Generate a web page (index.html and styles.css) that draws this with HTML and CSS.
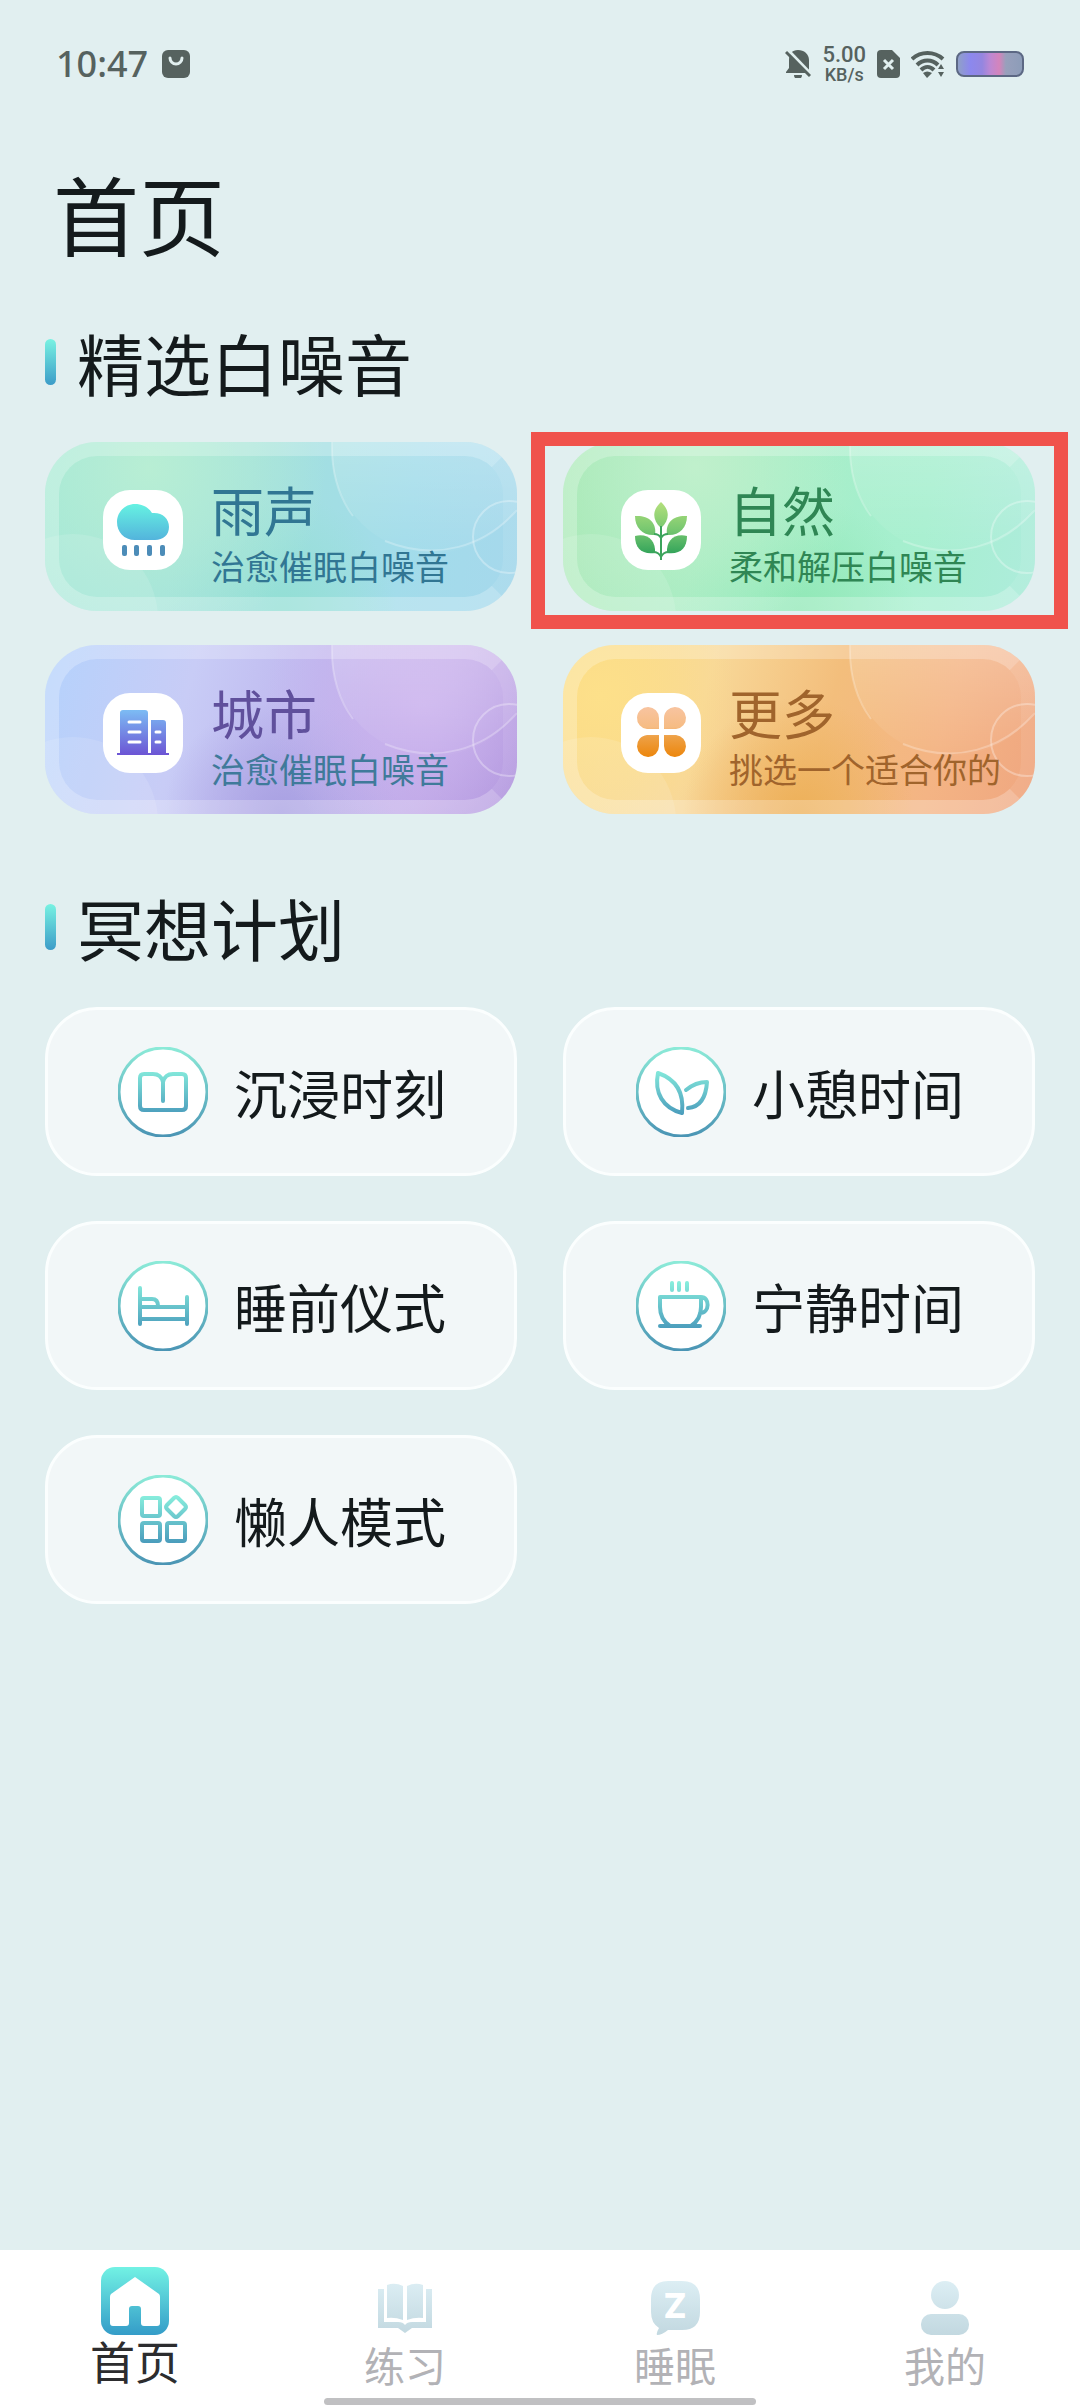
FILE: index.html
```html
<!DOCTYPE html>
<html lang="zh-CN">
<head>
    <meta charset="UTF-8">
    <meta name="viewport" content="width=device-width, initial-scale=1.0">
    <title>首页</title>
    <link rel="stylesheet" href="styles.css">
</head>
<body>
    <!-- Shared gradients and card decoration -->
    <svg class="defs" width="0" height="0" aria-hidden="true">
        <defs>
            <linearGradient id="teal" gradientUnits="userSpaceOnUse" x1="0" y1="22" x2="0" y2="68">
                <stop offset="0" stop-color="#86ecdc"/>
                <stop offset="1" stop-color="#4a9cbc"/>
            </linearGradient>
            <linearGradient id="ring" gradientUnits="userSpaceOnUse" x1="0" y1="0" x2="0" y2="90">
                <stop offset="0" stop-color="#8cebd8"/>
                <stop offset="1" stop-color="#4a94b4"/>
            </linearGradient>
            <linearGradient id="cloud" x1="0" y1="0" x2="0" y2="1">
                <stop offset="0" stop-color="#66f2e2"/>
                <stop offset="1" stop-color="#53b4dc"/>
            </linearGradient>
            <linearGradient id="leaf" gradientUnits="userSpaceOnUse" x1="0" y1="12" x2="0" y2="66">
                <stop offset="0" stop-color="#b4e07c"/>
                <stop offset="0.5" stop-color="#78c870"/>
                <stop offset="1" stop-color="#2ca058"/>
            </linearGradient>
            <linearGradient id="city" gradientUnits="userSpaceOnUse" x1="0" y1="17" x2="0" y2="62">
                <stop offset="0" stop-color="#7cbcf4"/>
                <stop offset="1" stop-color="#6c54d4"/>
            </linearGradient>
            <linearGradient id="petal" gradientUnits="userSpaceOnUse" x1="0" y1="14" x2="0" y2="64">
                <stop offset="0" stop-color="#f8c4a0"/>
                <stop offset="0.4" stop-color="#f6bc84"/>
                <stop offset="0.6" stop-color="#eea044"/>
                <stop offset="1" stop-color="#ec860c"/>
            </linearGradient>
            <linearGradient id="home" x1="0" y1="0" x2="0" y2="1">
                <stop offset="0" stop-color="#72f2e4"/>
                <stop offset="1" stop-color="#349cc8"/>
            </linearGradient>
            <linearGradient id="pale" gradientUnits="userSpaceOnUse" x1="0" y1="0" x2="0" y2="54">
                <stop offset="0" stop-color="#dceef4"/>
                <stop offset="1" stop-color="#c2d8e0"/>
            </linearGradient>
            <linearGradient id="battery" x1="0" y1="0" x2="1" y2="0">
                <stop offset="0" stop-color="#90a2c4"/>
                <stop offset="0.2" stop-color="#8c88ee"/>
                <stop offset="0.38" stop-color="#9486e0"/>
                <stop offset="0.5" stop-color="#bc88d4"/>
                <stop offset="0.64" stop-color="#d484bc"/>
                <stop offset="0.74" stop-color="#98a0bc"/>
                <stop offset="1" stop-color="#8c9cb8"/>
            </linearGradient>
            <linearGradient id="bubble" x1="0" y1="0" x2="0" y2="1">
                <stop offset="0.4" stop-color="#fff" stop-opacity="0.22"/>
                <stop offset="1" stop-color="#fff" stop-opacity="0.02"/>
            </linearGradient>
            <symbol id="card-art" viewBox="0 0 472 169" preserveAspectRatio="xMaxYMid slice">
                <circle cx="388" cy="10" r="101" fill="url(#bubble)"/>
                <path d="M287 0C286 34 296 58 308 74M340 99C392 120 440 104 472 68" fill="none" stroke="#fff" stroke-opacity="0.25" stroke-width="2"/>
                <circle cx="464" cy="95" r="36" fill="none" stroke="#fff" stroke-opacity="0.3" stroke-width="2"/>
                <circle cx="28" cy="177" r="85" fill="#fff" fill-opacity="0.12"/>
            </symbol>
        </defs>
    </svg>

    <header class="status-bar">
        <div class="status-left">
            <span class="clock">10:47</span>
            <svg width="28" height="28" viewBox="0 0 28 28">
                <rect width="28" height="28" rx="6" fill="#56625f"/>
                <path d="M8 8a6 6 0 0 0 12 0" fill="none" stroke="#e1efef" stroke-width="3" stroke-linecap="round"/>
            </svg>
        </div>
        <div class="status-right">
            <svg width="26" height="28" viewBox="0 0 26 28">
                <path d="M13 0C7 0 4 4 4 10V18L1 22V23H24V10C24 4 19 0 13 0ZM9 25a4 4 0 0 0 8 0Z" fill="#56625f"/>
                <path d="M3 0L27 25" stroke="#e1efef" stroke-width="3"/>
                <path d="M1 2L25 26" stroke="#56625f" stroke-width="3"/>
            </svg>
            <div class="net-speed">
                <span class="net-value">5.00</span>
                <span class="net-unit">KB/s</span>
            </div>
            <svg width="23" height="28" viewBox="0 0 23 28">
                <path d="M4 0H15L23 8V24Q23 28 19 28H4Q0 28 0 24V4Q0 0 4 0Z" fill="#56625f"/>
                <path d="M7 10L16 19M16 10L7 19" stroke="#e1efef" stroke-width="3"/>
            </svg>
            <svg width="34" height="28" viewBox="0 0 34 28">
                <g fill="none" stroke="#56625f" stroke-width="4">
                    <path d="M1 9C10 1 23 1 32 9"/>
                    <path d="M6 15C12 9 21 9 27 15"/>
                    <path d="M10 20C14 16 19 16 23 20"/>
                </g>
                <path d="M12 23Q16 20 21 23L16 28ZM27 19L30 14L33 19ZM27 22H33L30 27Z" fill="#56625f"/>
            </svg>
            <svg width="68" height="26" viewBox="0 0 68 26">
                <rect x="1" y="1" width="66" height="24" rx="7" fill="url(#battery)" stroke="#5c6884" stroke-width="2"/>
            </svg>
        </div>
    </header>

    <main class="content">
        <h1>首页</h1>

        <section>
            <h2>精选白噪音</h2>
            <div class="noise-grid">
                <a href="#rain" class="noise-card rain">
                    <svg class="card-art"><use href="#card-art"/></svg>
                    <svg class="noise-icon" viewBox="0 0 80 80">
                        <path d="M32 14C40 14 46 18 49 23C59 22 66 28 66 37C66 45 60 50 52 50H32C21 50 14 42 14 32C14 22 22 14 32 14Z" fill="url(#cloud)"/>
                        <g fill="#4c8cb8">
                            <rect x="19" y="55" width="5" height="11" rx="2"/>
                            <rect x="31" y="55" width="5" height="11" rx="2"/>
                            <rect x="44" y="55" width="5" height="11" rx="2"/>
                            <rect x="57" y="55" width="5" height="11" rx="2"/>
                        </g>
                    </svg>
                    <span class="noise-text"><strong>雨声</strong><small>治愈催眠白噪音</small></span>
                </a>
                <a href="#nature" class="noise-card nature selected">
                    <svg class="card-art"><use href="#card-art"/></svg>
                    <svg class="noise-icon" viewBox="0 0 80 80">
                        <g fill="url(#leaf)">
                            <path d="M40 12C49 20 49 30 40 38C31 30 31 20 40 12Z"/>
                            <path d="M14 26C27 25 36 32 34 45C22 46 14 38 14 26Z"/>
                            <path d="M66 26C53 25 44 32 46 45C58 46 66 38 66 26Z"/>
                            <path d="M14 46C27 43 35 51 34 63C21 65 14 58 14 46Z"/>
                            <path d="M66 46C53 43 45 51 46 63C59 65 66 58 66 46Z"/>
                        </g>
                        <path d="M40 36V70M33 44Q38 44 40 48Q42 44 47 44M32 62Q38 62 40 67Q42 62 48 62" fill="none" stroke="#3ca45c" stroke-width="2"/>
                    </svg>
                    <span class="noise-text"><strong>自然</strong><small>柔和解压白噪音</small></span>
                </a>
                <a href="#city" class="noise-card town">
                    <svg class="card-art"><use href="#card-art"/></svg>
                    <svg class="noise-icon" viewBox="0 0 80 80">
                        <path d="M17 60V20Q17 17 20 17H42Q45 17 45 20V60ZM48 58V27H60Q63 27 63 30V60H66V62H14V60H48Z" fill="url(#city)"/>
                        <path d="M26 29H37M26 39H37M26 49H37M53 39H57M53 49H57" stroke="#fff" stroke-width="3" stroke-linecap="round"/>
                    </svg>
                    <span class="noise-text"><strong>城市</strong><small>治愈催眠白噪音</small></span>
                </a>
                <a href="#more" class="noise-card more">
                    <svg class="card-art"><use href="#card-art"/></svg>
                    <svg class="noise-icon" viewBox="0 0 80 80">
                        <path d="M38 36H26A11 11 0 1 1 38 25ZM43 36V25A11 11 0 1 1 55 36ZM38 42V53A11 11 0 1 1 26 42ZM43 42H55A11 11 0 1 1 43 53Z" fill="url(#petal)"/>
                    </svg>
                    <span class="noise-text"><strong>更多</strong><small>挑选一个适合你的</small></span>
                </a>
            </div>
        </section>

        <section>
            <h2>冥想计划</h2>
            <div class="plan-grid">
                <a href="#immerse" class="plan-card">
                    <svg class="plan-icon" viewBox="0 0 90 90">
                        <circle cx="45" cy="45" r="44"/>
                        <path d="M45 54V35Q43 27 35 27H26Q22 27 22 31V59Q22 63 26 63H64Q68 63 68 59V31Q68 27 64 27H55Q47 27 45 35"/>
                    </svg>
                    <span>沉浸时刻</span>
                </a>
                <a href="#rest" class="plan-card">
                    <svg class="plan-icon" viewBox="0 0 90 90">
                        <circle cx="45" cy="45" r="44"/>
                        <path d="M22 26C18 46 27 61 46 66C48 48 42 33 22 26ZM50 43C56 38 62 35 71 35C70 50 64 60 52 61"/>
                    </svg>
                    <span>小憩时间</span>
                </a>
                <a href="#bedtime" class="plan-card">
                    <svg class="plan-icon" viewBox="0 0 90 90">
                        <circle cx="45" cy="45" r="44"/>
                        <path d="M22 27V63M69 36V63M22 46H69M22 58H69M22 38H34Q40 38 40 45"/>
                    </svg>
                    <span>睡前仪式</span>
                </a>
                <a href="#quiet" class="plan-card">
                    <svg class="plan-icon" viewBox="0 0 90 90">
                        <circle cx="45" cy="45" r="44"/>
                        <path d="M24 36H65V46C65 55 61 61 55 65H34C28 61 24 55 24 46ZM65 36C74 36 74 52 64 52M24 65H64M36 22V29M43 22V29M51 22V29"/>
                    </svg>
                    <span>宁静时间</span>
                </a>
                <a href="#lazy" class="plan-card">
                    <svg class="plan-icon" viewBox="0 0 90 90">
                        <circle cx="45" cy="45" r="44"/>
                        <rect x="24" y="23" width="18" height="18" rx="2"/>
                        <rect x="24" y="48" width="18" height="18" rx="2"/>
                        <rect x="49" y="48" width="18" height="18" rx="2"/>
                        <path d="M56 23Q58 21 60 23L67 30Q69 32 67 34L60 41Q58 43 56 41L49 34Q47 32 49 30Z"/>
                    </svg>
                    <span>懒人模式</span>
                </a>
            </div>
        </section>
    </main>

    <nav class="tab-bar">
        <a href="#home" class="tab active">
            <svg width="68" height="68" viewBox="0 0 68 68">
                <rect width="68" height="68" rx="14" fill="url(#home)"/>
                <path d="M34 10L58 27Q59 28 59 30V56Q59 59 56 59H43Q40 59 40 56V42Q40 39 37 39H31Q28 39 28 42V56Q28 59 25 59H12Q9 59 9 56V30Q9 28 10 27Z" fill="#fff"/>
            </svg>
            <span>首页</span>
        </a>
        <a href="#practice" class="tab">
            <svg width="54" height="54" viewBox="0 0 54 54">
                <path d="M9 4Q17 1 25 5V39Q17 36 9 37ZM29 5Q37 1 45 4V37Q37 36 29 39ZM0 8H6V41H20Q25 41 27 44Q29 41 34 41H48V8H54V47H34L27 52L20 47H0Z" fill="url(#pale)"/>
            </svg>
            <span>练习</span>
        </a>
        <a href="#sleep" class="tab">
            <svg width="54" height="54" viewBox="0 0 54 54">
                <path d="M20 0H34Q52 0 52 18V31Q52 49 34 49H20Q14 54 9 54Q8 52 11 47Q3 42 3 31V18Q3 0 20 0Z" fill="url(#pale)"/>
                <text x="27" y="37" text-anchor="middle" class="z">Z</text>
            </svg>
            <span>睡眠</span>
        </a>
        <a href="#mine" class="tab">
            <svg width="54" height="54" viewBox="0 0 54 54">
                <circle cx="27" cy="14" r="14" fill="url(#pale)"/>
                <rect x="3" y="33" width="48" height="21" rx="10" fill="url(#pale)"/>
            </svg>
            <span>我的</span>
        </a>
        <div class="home-indicator"></div>
    </nav>
</body>
</html>
```
FILE: styles.css
```css
* {
    box-sizing: border-box;
}

body {
    margin: 0;
    min-height: 100vh;
    display: flex;
    flex-direction: column;
    background: #e1eff0;
    color: #141a1c;
    font-family: "Noto Sans CJK SC", sans-serif;
}

a {
    color: inherit;
    text-decoration: none;
}

svg {
    flex-shrink: 0;
}

.defs {
    position: absolute;
}

/* Status bar */
.status-bar {
    height: 128px;
    padding: 0 56px;
    display: flex;
    align-items: center;
    justify-content: space-between;
    color: #56625f;
    font-family: "Noto Sans", sans-serif;
    font-weight: 500;
}

.status-left {
    display: flex;
    align-items: center;
    gap: 14px;
}

.clock {
    font-size: 36px;
    line-height: 48px;
}

.status-right {
    display: flex;
    align-items: center;
    gap: 11px;
}

.net-speed {
    display: flex;
    flex-direction: column;
    align-items: center;
    font-family: Roboto, sans-serif;
}

.net-value {
    font-size: 22px;
    line-height: 22px;
}

.net-unit {
    font-size: 18px;
    line-height: 18px;
}

/* Page content */
.content {
    padding: 25px 45px 60px;
}

h1 {
    margin: 0 0 49px;
    padding-left: 8px;
    font-size: 86px;
    line-height: 120px;
    font-weight: 400;
}

h2 {
    margin: 0 0 40px;
    display: flex;
    align-items: center;
    gap: 21px;
    font-size: 67px;
    line-height: 80px;
    font-weight: 400;
}

h2::before {
    content: "";
    width: 11px;
    height: 46px;
    border-radius: 6px;
    background: linear-gradient(#78f2e2, #3c9cc8);
}

section + section {
    margin-top: 73px;
}

/* White noise cards */
.noise-grid {
    display: grid;
    grid-template-columns: 1fr 1fr;
    gap: 34px 46px;
}

.noise-card {
    position: relative;
    height: 169px;
    padding: 6px 20px 0 58px;
    display: flex;
    align-items: center;
    gap: 28px;
    border-radius: 52px;
}

.noise-card::before {
    content: "";
    position: absolute;
    inset: 0;
    border: 14px solid rgba(255, 255, 255, 0.24);
    border-right-color: rgba(255, 255, 255, 0.08);
    border-radius: 52px;
}

.card-art {
    position: absolute;
    inset: 0;
    width: 100%;
    height: 100%;
    border-radius: 52px;
}

.noise-icon {
    position: relative;
    width: 80px;
    height: 80px;
    border-radius: 27px;
    background: #fff;
}

.noise-text {
    position: relative;
    padding-top: 10px;
    display: flex;
    flex-direction: column;
    white-space: nowrap;
}

.noise-text strong {
    font-size: 53px;
    line-height: 62px;
    font-weight: 400;
}

.noise-text small {
    font-size: 34px;
    line-height: 52px;
}

.rain {
    background:
        radial-gradient(circle at 22% 15%, #b8eed4, rgba(184, 238, 212, 0) 45%),
        radial-gradient(circle at 50% 100%, #92dfd4, rgba(146, 223, 212, 0) 40%),
        linear-gradient(100deg, #a2e8d6, #a2e0de 45%, #a2dcea 75%, #a6d8ec);
    color: #317693;
}

.nature {
    background:
        radial-gradient(circle at 28% 15%, #c0f0cc, rgba(192, 240, 204, 0) 45%),
        radial-gradient(circle at 50% 100%, #90e8b6, rgba(144, 232, 182, 0) 40%),
        linear-gradient(100deg, #a8e8b4, #a4eec8 45%, #a6efcf 75%, #aeecdc);
    color: #2f8654;
}

.town {
    background:
        radial-gradient(circle at 80% 35%, #ccb4ee, rgba(204, 180, 238, 0) 40%),
        radial-gradient(circle at 50% 100%, #a8a0e2, rgba(168, 160, 226, 0) 40%),
        linear-gradient(105deg, #b4d2fc, #c8ccf6 30%, #beb6ee 55%, #bda6e6 80%, #ac90da);
    color: #60509c;
}

.town small {
    color: #3f7a9a;
}

.more {
    background:
        radial-gradient(circle at 8% 30%, #fde08a, rgba(253, 224, 138, 0) 30%),
        radial-gradient(circle at 50% 100%, #edb058, rgba(237, 176, 88, 0) 40%),
        linear-gradient(105deg, #f9d880, #f8d898 30%, #f3be7c 55%, #f4b484 78%, #efa680);
    color: #a0642c;
}

.selected::after {
    content: "";
    position: absolute;
    inset: -10px -33px -18px -32px;
    border: 14px solid #f0524c;
}

/* Meditation plan cards */
.plan-grid {
    display: grid;
    grid-template-columns: 1fr 1fr;
    gap: 45px 46px;
}

.plan-card {
    height: 169px;
    padding: 0 20px 0 70px;
    display: flex;
    align-items: center;
    gap: 26px;
    border: 3px solid #fbfefe;
    border-radius: 52px;
    background: #f2f7f8;
    font-size: 53px;
    line-height: 64px;
    white-space: nowrap;
}

.plan-icon {
    width: 90px;
    height: 90px;
    fill: none;
    stroke: url(#teal);
    stroke-width: 4;
    stroke-linecap: round;
    stroke-linejoin: round;
}

.plan-icon circle {
    fill: #fff;
    stroke: url(#ring);
    stroke-width: 3;
}

/* Bottom tabs */
.tab-bar {
    position: relative;
    margin-top: auto;
    height: 158px;
    padding-bottom: 21px;
    display: flex;
    background: #fff;
}

.tab {
    flex: 1;
    display: flex;
    flex-direction: column;
    align-items: center;
    justify-content: flex-end;
    gap: 6px;
    color: #b2b2b6;
    font-size: 41px;
    line-height: 46px;
}

.tab.active {
    gap: 0;
    color: #2c2c2e;
    font-size: 45px;
    line-height: 52px;
}

.z {
    fill: #fff;
    font-family: Inter, sans-serif;
    font-size: 34px;
    font-weight: 800;
}

.home-indicator {
    position: absolute;
    left: 30%;
    right: 30%;
    bottom: 3px;
    height: 7px;
    border-radius: 4px;
    background: #c0c0c2;
}
```
